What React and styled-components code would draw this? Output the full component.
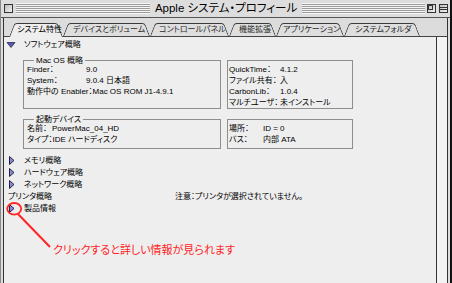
import React from "react";
import styled, { createGlobalStyle } from "styled-components";

const GlobalStyle = createGlobalStyle`
  html, body {
    margin: 0;
    padding: 0;
    background: #dddddd;
  }
`;

const Window = styled.div`
  width: 452px;
  height: 283px;
  box-sizing: border-box;
  display: flex;
  flex-direction: column;
  background: #dddddd;
  border-left: 1px solid #8a8a8a;
  border-right: 2px solid #111;
  overflow: hidden;
  font-family: "Liberation Sans", "Noto Sans CJK JP", sans-serif;
  font-feature-settings: "palt" 1;
  color: #000;
`;

const TitleBar = styled.div`
  height: 17px;
  flex: none;
  display: flex;
  align-items: center;
  padding: 0 2px;
  border-bottom: 1px solid #555;
`;

const BoxButton = styled.div`
  width: 9px;
  height: 9px;
  box-sizing: border-box;
  flex: none;
  border: 1px solid #333;
  background: linear-gradient(135deg, #bbb 0%, #f4f4f4 100%);
  margin-left: ${(p) => p.$ml || 0}px;
  display: flex;

  svg {
    display: block;
  }
`;

const Stripes = styled.div`
  flex: ${(p) => p.$grow} 1 0;
  height: 11px;
  margin: 0 ${(p) => p.$mr}px 0 ${(p) => p.$ml}px;
  background: repeating-linear-gradient(
    to bottom,
    #f6f6f6 0 1px,
    #9c9c9c 1px 2px
  );
`;

const Title = styled.div`
  flex: none;
  font-size: 11.5px;
  line-height: 17px;
  padding: 0 3px;
  white-space: nowrap;
`;

const Body = styled.div`
  flex: 1;
  display: flex;
  padding: 0 2px;
  min-height: 0;
`;

const Inner = styled.div`
  flex: 1;
  display: flex;
  flex-direction: column;
  border-left: 1px solid #333;
  border-right: 1px solid #333;
  min-width: 0;
`;

const TabStrip = styled.div`
  height: 18px;
  flex: none;
  display: flex;
  align-items: flex-end;
  padding-left: 5px;
  border-bottom: 1px solid #444;
  background: #dcdcdc;
`;

const Tab = styled.div`
  position: relative;
  z-index: ${(p) => (p.$active ? 2 : 1)};
  flex: none;
  width: ${(p) => p.$w}px;
  height: ${(p) => (p.$active ? 14 : 13)}px;
  margin-bottom: ${(p) => (p.$active ? -1 : 0)}px;
  box-sizing: border-box;
  padding-left: ${(p) => p.$pl}px;
  font-size: 8px;
  line-height: 13px;
  white-space: nowrap;
  color: ${(p) => (p.$active ? "#000" : "#2a2a2a")};
  isolation: isolate;

  &::before,
  &::after {
    content: "";
    position: absolute;
    top: 0;
    bottom: 0;
    width: 56%;
    z-index: -1;
    background: ${(p) => (p.$active ? "#eeeeee" : "#dedede")};
    border-top: 1px solid #3a3a3a;
  }

  &::before {
    left: 0;
    border-left: 1px solid #3a3a3a;
    border-top-left-radius: 3px;
    transform: skewX(-21deg);
    transform-origin: bottom left;
  }

  &::after {
    right: 0;
    border-right: 1px solid #3a3a3a;
    border-top-right-radius: 3px;
    transform: skewX(21deg);
    transform-origin: bottom right;
  }
`;

const PanelRow = styled.div`
  flex: 1;
  display: flex;
  min-height: 0;
`;

const Content = styled.div`
  flex: 1;
  position: relative;
  background: #eeeeee;
  border-right: 1px solid #333;
  padding-top: 3px;
  font-size: 8px;
  overflow: hidden;
`;

const ScrollTrack = styled.div`
  width: 10px;
  flex: none;
  background: #f3f3f3;
`;

const Disclosure = styled.div`
  display: flex;
  align-items: center;
  height: ${(p) => p.$h || 12}px;
  line-height: ${(p) => p.$h || 12}px;
  padding-left: 2px;
  white-space: nowrap;

  svg {
    flex: none;
    display: block;
  }
`;

const GroupRow = styled.div`
  display: flex;
  align-items: stretch;
  gap: 6px;
  margin: ${(p) => p.$mt}px 0 0 19px;
`;

const Group = styled.fieldset`
  width: ${(p) => p.$w}px;
  box-sizing: border-box;
  min-width: 0;
  margin: 0;
  padding: 0 0 ${(p) => p.$pb || 0}px 3px;
  border: 1px solid #8e8e8e;

  legend {
    padding: 0 2px;
    margin-left: 7px;
    margin-bottom: -1px;
    font-size: 8px;
    line-height: 9px;
  }
`;

const Box = styled.div`
  width: ${(p) => p.$w}px;
  box-sizing: border-box;
  margin-top: 4px;
  padding: 3px 0 ${(p) => p.$pb || 0}px 1px;
  border: 1px solid #8e8e8e;
`;

const KV = styled.div`
  display: flex;
  line-height: 11px;
  white-space: nowrap;
`;

const Key = styled.span`
  min-width: ${(p) => p.$w}px;
`;

const Spacer = styled.div`
  height: ${(p) => p.$h}px;
`;

const PrinterRow = styled.div`
  display: flex;
  height: 12px;
  line-height: 12px;
  padding-left: 4px;
  white-space: nowrap;
`;

const PrinterLabel = styled.span`
  width: 167px;
  flex: none;
`;

const Annotation = styled.div`
  margin-top: 28px;
  padding-left: 49px;
  font-size: 11px;
  line-height: 14px;
  color: #ff2424;
  white-space: nowrap;
`;

const Marker = styled.svg`
  position: absolute;
  left: 0;
  top: 163px;
  overflow: visible;
`;

const DownArrow = () => (
  <svg width="18" height="10" viewBox="0 0 18 10">
    <polygon points="1,2.5 9,2.5 5,7.5" fill="#5b5ba8" stroke="#2a2a55" strokeWidth="0.8" />
  </svg>
);

const RightArrow = () => (
  <svg width="18" height="12" viewBox="0 0 18 12">
    <polygon points="3.5,1.5 8,5.5 3.5,9.5" fill="#8a8ad0" stroke="#22224a" strokeWidth="1" />
  </svg>
);

const ZoomIcon = () => (
  <svg width="7" height="7" viewBox="0 0 7 7">
    <rect x="0.5" y="0.5" width="4" height="4" fill="none" stroke="#333" strokeWidth="1" />
  </svg>
);

const ShadeIcon = () => (
  <svg width="7" height="7" viewBox="0 0 7 7">
    <line x1="0" y1="2.5" x2="7" y2="2.5" stroke="#333" strokeWidth="1" />
    <line x1="0" y1="4.5" x2="7" y2="4.5" stroke="#333" strokeWidth="1" />
  </svg>
);

const tabs = [
  { label: "システム特性", active: true, w: 54, pl: 8 },
  { label: "デバイスとボリューム", w: 87, pl: 10 },
  { label: "コントロールパネル", w: 79, pl: 9 },
  { label: "機能拡張", w: 47, pl: 10 },
  { label: "アプリケーション", w: 68, pl: 7 },
  { label: "システムフォルダ", w: 76, pl: 11 },
];

const memoryRows = ["メモリ概略", "ハードウェア概略", "ネットワーク概略"];

export default function App() {
  return (
    <>
      <GlobalStyle />
      <Window>
        <TitleBar>
          <BoxButton $ml={1} />
          <Stripes $grow={145} $ml={3} $mr={2} />
          <Title>Apple システム・プロフィール</Title>
          <Stripes $grow={133} $ml={2} $mr={1} />
          <BoxButton $ml={1}>
            <ZoomIcon />
          </BoxButton>
          <BoxButton $ml={3}>
            <ShadeIcon />
          </BoxButton>
        </TitleBar>
        <Body>
          <Inner>
            <TabStrip>
              {tabs.map((t) => (
                <Tab key={t.label} $active={t.active} $w={t.w} $pl={t.pl}>
                  {t.label}
                </Tab>
              ))}
            </TabStrip>
            <PanelRow>
              <Content>
                <Disclosure $h={10}>
                  <DownArrow />
                  ソフトウェア概略
                </Disclosure>

                <GroupRow $mt={6}>
                  <Group $w={198}>
                    <legend>Mac OS 概略</legend>
                    <KV>
                      <Key $w={59}>Finder：</Key>9.0
                    </KV>
                    <KV>
                      <Key $w={59}>System：</Key>9.0.4 日本語
                    </KV>
                    <KV>
                      <Key $w={59}>動作中の Enabler：</Key>Mac OS ROM J1-4.9.1
                    </KV>
                  </Group>
                  <Box $w={126}>
                    <KV>
                      <Key $w={51}>QuickTime：</Key>4.1.2
                    </KV>
                    <KV>
                      <Key $w={51}>ファイル共有：</Key>入
                    </KV>
                    <KV>
                      <Key $w={51}>CarbonLib：</Key>1.0.4
                    </KV>
                    <KV>
                      <Key $w={51}>マルチユーザ：</Key>未インストール
                    </KV>
                  </Box>
                </GroupRow>

                <GroupRow $mt={6}>
                  <Group $w={198}>
                    <legend>起動デバイス</legend>
                    <KV>
                      <Key $w={25}>名前：</Key>PowerMac_04_HD
                    </KV>
                    <KV>
                      <Key $w={16}>タイプ：</Key>IDE ハードディスク
                    </KV>
                  </Group>
                  <Box $w={126} $pb={3}>
                    <KV>
                      <Key $w={34}>場所：</Key>ID = 0
                    </KV>
                    <KV>
                      <Key $w={34}>バス：</Key>内部 ATA
                    </KV>
                  </Box>
                </GroupRow>

                <Spacer $h={6} />
                {memoryRows.map((r) => (
                  <Disclosure key={r}>
                    <RightArrow />
                    {r}
                  </Disclosure>
                ))}
                <PrinterRow>
                  <PrinterLabel>プリンタ概略</PrinterLabel>
                  注意：プリンタが選択されていません。
                </PrinterRow>
                <Disclosure>
                  <RightArrow />
                  製品情報
                </Disclosure>

                <Annotation>クリックすると詳しい情報が見られます</Annotation>

                <Marker width="50" height="50" viewBox="0 0 50 50">
                  <ellipse cx="10.2" cy="8.8" rx="7" ry="5.8" fill="none" stroke="#ff2424" strokeWidth="1.8" />
                  <line x1="14" y1="14" x2="46" y2="47" stroke="#ff2424" strokeWidth="2" />
                </Marker>
              </Content>
              <ScrollTrack />
            </PanelRow>
          </Inner>
        </Body>
      </Window>
    </>
  );
}
